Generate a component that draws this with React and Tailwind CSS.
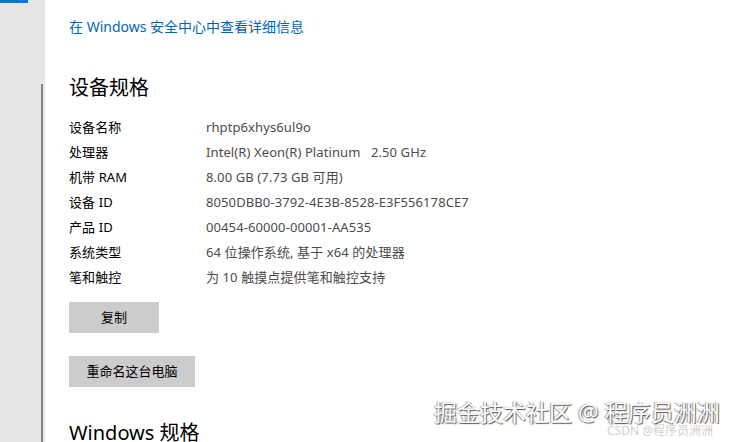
const specs = [
  ["设备名称", "rhptp6xhys6ul9o"],
  ["处理器", "Intel(R) Xeon(R) Platinum\u00a0\u00a0\u00a02.50 GHz"],
  ["机带 RAM", "8.00 GB (7.73 GB 可用)"],
  ["设备 ID", "8050DBB0-3792-4E3B-8528-E3F556178CE7"],
  ["产品 ID", "00454-60000-00001-AA535"],
  ["系统类型", "64 位操作系统, 基于 x64 的处理器"],
  ["笔和触控", "为 10 触摸点提供笔和触控支持"],
];

export default function App() {
  return (
    <div
      className="relative flex h-[442px] w-[734px] overflow-hidden bg-white"
      style={{ fontFamily: '"Noto Sans", "Noto Sans CJK SC", sans-serif' }}
    >
      {/* side pane */}
      <div className="relative w-[45px] shrink-0 bg-[#e6e6e6]">
        <div className="h-[3px] w-[28px] bg-[#0078d7]" />
        <div className="absolute left-[41px] top-[84px] bottom-0 w-[2px] bg-[#858585]" />
      </div>

      <div className="flex flex-col pl-[24px]">
        <a className="mt-[17px] text-[14px] leading-[20px] text-[#0067b8]">
          在 Windows 安全中心中查看详细信息
        </a>

        <h2 className="mt-[37px] text-[20px] leading-[28px] text-black">设备规格</h2>

        <div className="mt-[13px] flex flex-col">
          {specs.map(([k, v]) => (
            <div key={k} className="flex h-[25px] items-center text-[13px] tracking-[0.1px]">
              <span className="w-[137px] text-black">{k}</span>
              <span className="text-[#4c4c4c]">{v}</span>
            </div>
          ))}
        </div>

        <button className="mt-[12px] h-[31px] w-[90px] shrink-0 bg-[#cccccc] text-[13px] text-black">
          复制
        </button>

        <button className="mt-[23px] h-[31px] w-[126px] shrink-0 bg-[#cccccc] text-[13px] text-black">
          重命名这台电脑
        </button>

        <h2 className="mt-[32px] text-[20px] leading-[28px] text-black">Windows 规格</h2>
      </div>

      {/* watermarks */}
      <div
        className="absolute left-[434px] top-[397px] text-[23px] leading-[30px] text-white"
        style={{ textShadow: "1px 1px 1px #555, -1px 0 1px #999" }}
      >
        掘金技术社区 @ 程序员洲洲
      </div>
      <div className="absolute left-[607px] top-[423px] text-[12px] leading-[16px] text-[#d0d0d0]">
        CSDN @程序员洲洲
      </div>
    </div>
  );
}
